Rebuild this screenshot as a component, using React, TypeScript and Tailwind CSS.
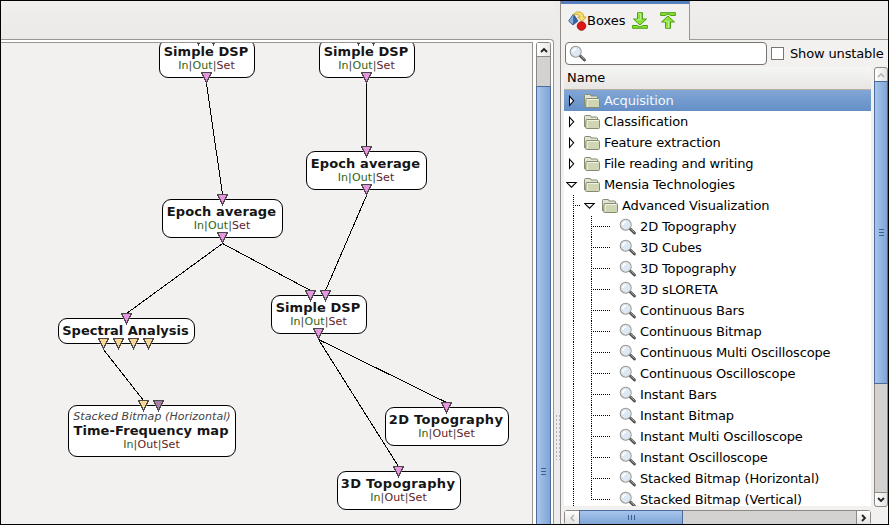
import React from "react";

type Port = { x: number; color?: string };
type NodeDef = {
  x: number;
  y: number;
  w: number;
  h: number;
  title: string;
  tracking: string;
  subtitle?: string;
  out?: string;
  flags?: boolean;
  inputs: Port[];
  outputs: Port[];
};

const PINK = "#e995e4";
const SAND = "#fbd692";
const PLUM = "#ad7fa8";
const GREEN = "text-[#2f6410]";
const MAROON = "text-[#641a1e]";

const nodes: NodeDef[] = [
  { x: 159, y: 39, w: 96, h: 39, title: "Simple DSP", tracking: "tracking-[0.05px]", out: GREEN, flags: true, inputs: [{ x: 198 }, { x: 213 }], outputs: [{ x: 206 }] },
  { x: 319, y: 39, w: 96, h: 39, title: "Simple DSP", tracking: "tracking-[0.05px]", out: GREEN, flags: true, inputs: [{ x: 358 }, { x: 373 }], outputs: [{ x: 366 }] },
  { x: 306, y: 151, w: 121, h: 39, title: "Epoch average", tracking: "tracking-[0.1px]", out: GREEN, flags: true, inputs: [{ x: 366 }], outputs: [{ x: 366 }] },
  { x: 162, y: 199, w: 121, h: 39, title: "Epoch average", tracking: "tracking-[0.1px]", out: GREEN, flags: true, inputs: [{ x: 222 }], outputs: [{ x: 222 }] },
  { x: 271, y: 295, w: 96, h: 39, title: "Simple DSP", tracking: "tracking-[0.05px]", out: GREEN, flags: true, inputs: [{ x: 310 }, { x: 325 }], outputs: [{ x: 318 }] },
  { x: 58, y: 318, w: 137, h: 26, title: "Spectral Analysis", tracking: "tracking-[0px]", inputs: [{ x: 126 }], outputs: [{ x: 103, color: SAND }, { x: 118, color: SAND }, { x: 133, color: SAND }, { x: 148, color: SAND }] },
  { x: 68, y: 405, w: 168, h: 52, title: "Time-Frequency map", tracking: "tracking-[0.1px]", subtitle: "Stacked Bitmap (Horizontal)", out: MAROON, flags: true, inputs: [{ x: 143, color: SAND }, { x: 158, color: PLUM }], outputs: [] },
  { x: 385, y: 407, w: 124, h: 39, title: "2D Topography", tracking: "tracking-[0.33px]", out: MAROON, flags: true, inputs: [{ x: 446 }], outputs: [] },
  { x: 337, y: 471, w: 124, h: 39, title: "3D Topography", tracking: "tracking-[0.33px]", out: MAROON, flags: true, inputs: [{ x: 398 }], outputs: [] },
];

const links = [
  [206, 83, 222, 194],
  [366, 83, 366, 146],
  [366, 195, 325, 290],
  [222, 243, 126, 313],
  [222, 243, 310, 290],
  [103, 349, 143, 400],
  [318, 339, 446, 402],
  [318, 339, 398, 466],
];

// The canvas viewport starts at (1, 43) of the window.
const OX = 1;
const OY = 43;

function PortMark({ x, y, color = PINK }: { x: number; y: number; color?: string }) {
  return (
    <g>
      <path d={`M${x - 4.5} ${y + 0.5}H${x + 5.5}L${x + 0.5} ${y + 10.5}Z`} fill={color} stroke="#4a4a4a" strokeWidth="1" />
      <path d={`M${x + 0.5} ${y + 9}v3`} stroke="#4a4a4a" />
    </g>
  );
}

function CanvasNode({ n }: { n: NodeDef }) {
  return (
    <div
      className="absolute flex flex-col items-center rounded-[9px] border border-black bg-white pt-[5px] whitespace-nowrap"
      style={{ left: n.x - OX, top: n.y - OY, width: n.w, height: n.h }}
    >
      {n.subtitle && <div className="h-[13px] text-[11px] leading-[11px] tracking-[0.08px] text-[#444] italic">{n.subtitle}</div>}
      <div className={`mr-[2px] h-[14px] text-[13px] leading-[14px] font-bold text-[#151515] ${n.tracking}`}>{n.title}</div>
      {n.flags && (
        <div className="mr-px h-[13px] text-[11px] leading-[13px] tracking-[0.1px] text-[#444]">
          <span className="text-[#2f6410]">In</span>|<span className={n.out}>Out</span>|<span className="text-[#641a1e]">Set</span>
        </div>
      )}
    </div>
  );
}

function Folder() {
  return (
    <svg width="18" height="16" viewBox="0 0 18 16" className="shrink-0">
      <path d="M1.500 12.500V2.500q0-1 1-1h4.500q1 0 1 1.500h5.500q1 0 1 1v2h1v7H2.500q-1 0-1-1Z" fill="#e3e5d4" stroke="#858a70" />
      <path d="M3.500 5.500h12q1 0 1 1v7q0 1-1 1h-12q-.8 0-.8-1l.3-7q0-1 .5-1Z" fill="#d0d5b3" stroke="#858a70" />
      <path d="M4.300 13.500v-7h11.200" fill="none" stroke="#f0f2e4" />
    </svg>
  );
}

function Lens() {
  return (
    <svg width="18" height="18" viewBox="0 0 18 18" className="shrink-0">
      <path d="M11.300 11l4.200 4" stroke="#4d4d4d" strokeWidth="2.800" strokeLinecap="round" />
      <path d="M11.500 10.800l4 3.700" stroke="#aaa" strokeWidth="1" />
      <circle cx="6.700" cy="6.700" r="5.400" fill="#dce8f4" stroke="#8f918f" strokeWidth="1.200" />
      <circle cx="6.700" cy="6.700" r="4.600" fill="none" stroke="#e4e4e2" strokeWidth=".8" />
      <path d="M4 7a3 3 0 0 1 3-3" fill="none" stroke="#fff" strokeWidth="1.500" />
    </svg>
  );
}

function Expander({ open }: { open?: boolean }) {
  return (
    <svg width="12" height="12" viewBox="0 0 12 12" className="shrink-0">
      <path d={open ? "M.8 3.500h9.400L5.500 8.200Z" : "M3.500 1.200v9.200L7.700 5.800Z"} fill="#fff" stroke="#000" strokeWidth="1.050" />
    </svg>
  );
}

function FolderRow({ label, open, selected }: { label: string; open?: boolean; selected?: boolean }) {
  return (
    <div className={`flex h-[21px] shrink-0 items-center pl-[2px] ${selected ? "bg-linear-to-b from-[#82a6d6] to-[#648fc6] text-[#f4f7fb]" : ""}`}>
      <Expander open={open} />
      <span className="ml-[5px] flex"><Folder /></span>
      <span className="ml-[3px]">{label}</span>
    </div>
  );
}

function LeafRow({ label, last }: { label: string; last?: boolean }) {
  return (
    <div className="flex h-[21px] shrink-0 items-center">
      <svg width="55" height="21" className="shrink-0" shapeRendering="crispEdges">
        <g stroke="#000" strokeDasharray="1 1" fill="none">
          <path d="M9.500 0V21" />
          <path d={last ? "M27.500 0V11" : "M27.500 0V21"} />
          <path d="M29 10.500H46" />
        </g>
      </svg>
      <Lens />
      <span className="ml-[3px]">{label}</span>
    </div>
  );
}

const leaves = [
  "2D Topography",
  "3D Cubes",
  "3D Topography",
  "3D sLORETA",
  "Continuous Bars",
  "Continuous Bitmap",
  "Continuous Multi Oscilloscope",
  "Continuous Oscilloscope",
  "Instant Bars",
  "Instant Bitmap",
  "Instant Multi Oscilloscope",
  "Instant Oscilloscope",
  "Stacked Bitmap (Horizontal)",
  "Stacked Bitmap (Vertical)",
];

function Arrow({ dir, dim }: { dir: "up" | "down" | "left" | "right"; dim?: boolean }) {
  const paths = { up: "M1 6l3-3 3 3", down: "M1 2l3 3 3-3", left: "M6 1L3 4l3 3", right: "M2 1l3 3-3 3" };
  return (
    <svg width="8" height="8" viewBox="0 0 8 8">
      <path d={paths[dir]} fill="none" stroke={dim ? "#aaa" : "#222"} strokeWidth={dim ? 1.3 : 1.8} />
    </svg>
  );
}

function BoxesLogo() {
  return (
    <svg width="19" height="20" viewBox="0 0 19 20">
      <path d="M5.500 3L.6 10 5 14l5-4Z" fill="#3465a4" stroke="#24446f" strokeWidth=".7" />
      <path d="M5.300 4L1 10l4 3.200Z" fill="#8eb0d8" />
      <path d="M5.500 4.500C6 1.500 8.500.5 11.500 1c3 .5 4.200 2.500 4.300 5h2.400L14 10.500 9.500 6h2.500c-.2-2-3-3.500-6.500-1.500Z" fill="#f8df6d" stroke="#c09b18" strokeWidth=".8" />
      <circle cx="13.500" cy="15" r="4.300" fill="#e01616" stroke="#8e0909" strokeWidth=".8" />
    </svg>
  );
}

function GreenArrow({ up }: { up?: boolean }) {
  return (
    <svg width="16" height="17" viewBox="0 0 16 17">
      <g transform={up ? "matrix(1 0 0 -1 0 17)" : undefined}>
        <path d="M5.500 .7h5v6.300h4L8 13 1.500 7h4Z" fill="#8ae234" stroke="#4aa010" strokeLinejoin="round" />
        <path d="M6.500 1.700h2v6H4.500" fill="none" stroke="#c0f090" />
        <path d="M.6 13.500h4.500L8 15l2.900-1.500h4.500v2.800H.6Z" fill="#8ae234" stroke="#4aa010" strokeLinejoin="round" />
      </g>
    </svg>
  );
}

export default function App() {
  return (
    <div className="flex h-[525px] w-[889px] overflow-hidden border border-black bg-[#edecea] font-['DejaVu_Sans',sans-serif] text-[13px] leading-[16px] tracking-[-0.14px] text-black">
      <div className="flex w-[553px] shrink-0 flex-col">
        <div className="h-[38px] shrink-0 bg-linear-to-b from-[#f2efee] via-[#edecea] to-[#ebeae8]" />
        <div className="flex flex-1 rounded-tr-[4px] border-t border-r border-[#999591] bg-white pt-[2px] pr-[1px]">
          <div className="relative w-[532px] shrink-0 overflow-hidden border-t border-r border-[#999591] bg-[#f2f1f0]">
            {nodes.map((n, i) => (
              <CanvasNode key={i} n={n} />
            ))}
            <svg className="absolute top-0 left-0" width="531" height="482" viewBox="1 43 531 482" shapeRendering="crispEdges">
              {links.map(([x1, y1, x2, y2], i) => (
                <line key={i} x1={x1 + 0.5} y1={y1 + 0.5} x2={x2 + 0.5} y2={y2 + 0.5} stroke="#000" />
              ))}
              {nodes.map((n, i) => (
                <g key={i}>
                  {n.inputs.map((p) => (
                    <PortMark key={p.x} x={p.x} y={n.y - 5} color={p.color} />
                  ))}
                  {n.outputs.map((p) => (
                    <PortMark key={p.x} x={p.x} y={n.y + n.h - 6} color={p.color} />
                  ))}
                </g>
              ))}
            </svg>
          </div>
          <div className="ml-[3px] flex w-[15px] shrink-0 flex-col rounded-t-[3px] border-x border-t border-[#888] bg-[#d3d2d0]">
            <div className="flex h-[14px] shrink-0 items-center justify-center border-b border-[#888] bg-linear-to-r from-white to-[#e8e7e5]">
              <Arrow dir="up" />
            </div>
            <div className="h-[29px] shrink-0" />
            <div className="-mx-px flex flex-1 flex-col items-center border-x border-t border-[#4a6d9e] bg-linear-to-r from-[#a8c5ec] to-[#7fa5d6] pt-[381px]">
              <div className="flex flex-col gap-[2px]">
                <i className="h-px w-[5px] bg-[#3b5f92]" />
                <i className="h-px w-[5px] bg-[#3b5f92]" />
                <i className="h-px w-[5px] bg-[#3b5f92]" />
              </div>
            </div>
          </div>
        </div>
      </div>

      <div className="flex w-[6px] shrink-0 flex-col items-center pt-[413px]">
        <div className="h-[46px] w-[5px] bg-[radial-gradient(circle,#b5b3b0_0.700px,transparent_0.900px)] bg-size-[3px_4px]" />
      </div>

      <div className="flex min-w-0 flex-1 flex-col border-l border-[#8f8c89] bg-[#f2f1f0]">
        <div className="flex h-[39px] shrink-0">
          <div className="flex w-[129px] shrink-0 border-t-[3px] border-r border-t-[#5680bd] border-r-[#999591] bg-[#f2f1f0] pl-[7px]">
            <div className="flex h-[33px] items-center">
              <BoxesLogo />
              <span className="w-[41px] tracking-[0px]">Boxes</span>
              <span className="ml-[4px]"><GreenArrow /></span>
              <span className="ml-[12px]"><GreenArrow up /></span>
            </div>
          </div>
          <div className="flex-1 border-b border-[#a09d99] bg-linear-to-b from-[#f0eeec] to-[#ebeae8]" />
        </div>

        <div className="flex h-[27px] shrink-0 items-center pl-[4px]">
          <div className="flex h-[23px] w-[202px] items-center rounded-[4px] border border-[#77736f] bg-white pl-[3px]">
            <Lens />
          </div>
          <div className="ml-[4px] h-[13px] w-[13px] border border-[#777] bg-white" />
          <span className="ml-[6px] whitespace-nowrap">Show unstable</span>
        </div>

        <div className="flex min-h-0 flex-1">
          <div className="flex min-w-0 flex-1 flex-col pl-[3px]">
            <div className="flex h-[439px] shrink-0 flex-col overflow-hidden bg-white">
              <div className="flex h-[23px] shrink-0 items-center border-b border-[#b8b0a0] bg-linear-to-b from-[#f6f6f5] to-[#e7e6e4] pl-[3px] tracking-[0px]">Name</div>
              <FolderRow label="Acquisition" selected />
              <FolderRow label="Classification" />
              <FolderRow label="Feature extraction" />
              <FolderRow label="File reading and writing" />
              <FolderRow label="Mensia Technologies" open />
              <div className="flex h-[21px] shrink-0 items-center">
                <svg width="20" height="21" shapeRendering="crispEdges" className="shrink-0">
                  <path d="M9.500 0V21M11 10.500H16" stroke="#000" strokeDasharray="1 1" />
                </svg>
                <Expander open />
                <span className="ml-[5px] flex"><Folder /></span>
                <span className="ml-[3px]">Advanced Visualization</span>
              </div>
              {leaves.map((l, i) => (
                <LeafRow key={l} label={l} last={i === leaves.length - 1} />
              ))}
            </div>
            <div className="mt-[4px] flex h-[15px] shrink-0 rounded-[3px] border border-[#8c8986] bg-[#d3d2d0]">
              <div className="flex w-[14px] shrink-0 items-center justify-center bg-linear-to-b from-white to-[#e4e3e1]">
                <Arrow dir="left" dim />
              </div>
              <div className="-my-px flex w-[104px] items-center justify-center gap-[2px] border border-[#4a6d9e] bg-linear-to-b from-[#a8c5ec] to-[#7fa5d6]">
                <i className="h-[5px] w-px bg-[#3b5f92]" />
                <i className="h-[5px] w-px bg-[#3b5f92]" />
                <i className="h-[5px] w-px bg-[#3b5f92]" />
              </div>
              <div className="flex-1" />
              <div className="flex w-[14px] items-center justify-center border-l border-[#8c8986] bg-linear-to-b from-white to-[#e4e3e1]">
                <Arrow dir="right" />
              </div>
            </div>
          </div>
          <div className="ml-[3px] flex h-[440px] w-[14px] shrink-0 flex-col rounded-[3px] border border-[#8c8986] bg-[#d3d2d0]">
            <div className="flex h-[13px] shrink-0 items-center justify-center rounded-t-[3px] bg-linear-to-r from-white to-[#e4e3e1]">
              <Arrow dir="up" dim />
            </div>
            <div className="-mx-px flex h-[303px] shrink-0 flex-col items-center justify-center gap-[2px] border border-[#4a6d9e] bg-linear-to-r from-[#a8c5ec] to-[#7fa5d6]">
              <i className="h-px w-[5px] bg-[#3b5f92]" />
              <i className="h-px w-[5px] bg-[#3b5f92]" />
              <i className="h-px w-[5px] bg-[#3b5f92]" />
            </div>
            <div className="flex-1" />
            <div className="flex h-[14px] items-center justify-center rounded-b-[3px] border-t border-[#8c8986] bg-linear-to-r from-white to-[#e4e3e1]">
              <Arrow dir="down" />
            </div>
          </div>
        </div>
      </div>
    </div>
  );
}
